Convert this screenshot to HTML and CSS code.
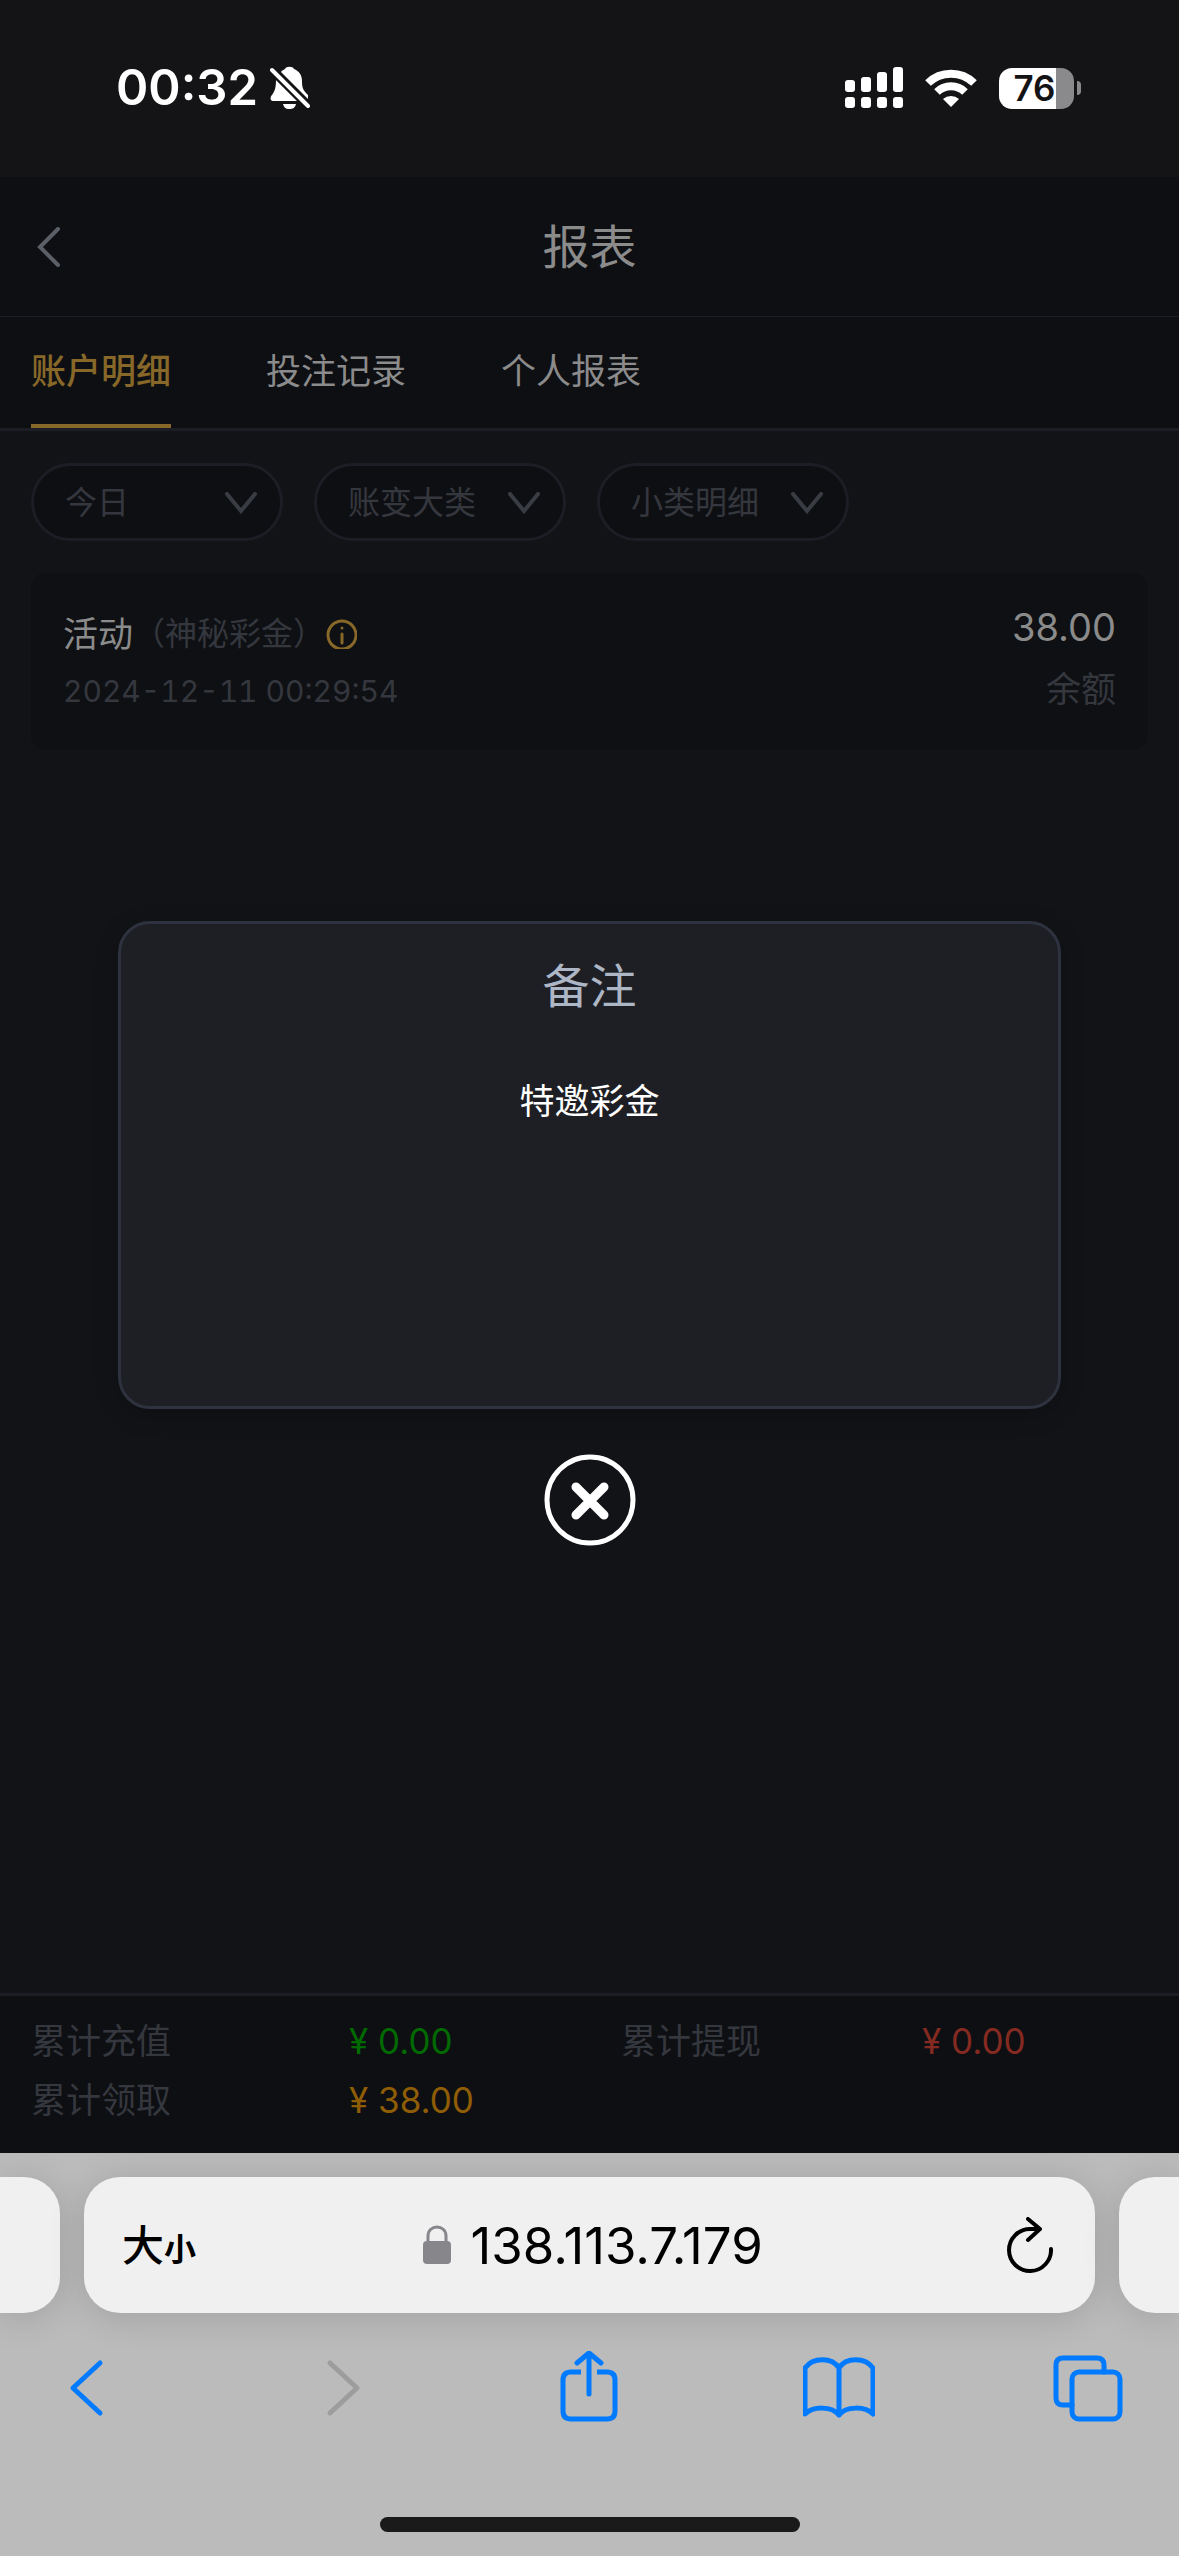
FILE: index.html
```html
<!DOCTYPE html>
<html lang="zh-CN">

<head>
	<meta charset="UTF-8">
	<meta name="viewport" content="width=device-width, initial-scale=1.0">
	<title>报表</title>
	<link rel="stylesheet" href="styles.css">
</head>

<body>
	<div class="status-bar">
		<div class="status-left">
			<span class="time">00:32</span>
			<svg class="bell" width="40" height="44" viewBox="0 0 40 44">
				<path fill="#fff" d="M11 6 C12 4 14 4 15 3 C16 0 23 0 24 3 C29 5 32 9 32 15 C32 22 33 24 38 29 V33 Z" />
				<path fill="#fff" d="M6 14 L27 35 H3 C0 35 0 31 2 29 C5 25 6 21 6 14 Z" />
				<path fill="#fff" d="M13 38 H26 C25 42 23 43 19 43 C16 43 14 42 13 38 Z" />
				<path stroke="#141416" stroke-width="8" d="M2 4 L38 40" />
				<path stroke="#fff" stroke-width="4" stroke-linecap="round" d="M2 4 L38 40" />
			</svg>
		</div>
		<div class="status-right">
			<svg width="58" height="42" viewBox="0 0 58 42" fill="#fff">
				<rect x="0" y="13" width="10" height="12" rx="3" />
				<rect x="16" y="10" width="10" height="15" rx="3" />
				<rect x="32" y="5" width="10" height="20" rx="3" />
				<rect x="48" y="0" width="10" height="25" rx="3" />
				<rect x="0" y="30" width="10" height="11" rx="3" />
				<rect x="16" y="30" width="10" height="11" rx="3" />
				<rect x="32" y="30" width="10" height="11" rx="3" />
				<rect x="48" y="30" width="10" height="11" rx="3" />
			</svg>
			<svg width="52" height="38" viewBox="0 0 52 38">
				<path fill="none" stroke="#fff" stroke-width="8" d="M3 14 A33 33 0 0 1 49 14" />
				<path fill="none" stroke="#fff" stroke-width="8" d="M12 23 A20 20 0 0 1 40 23" />
				<path fill="#fff" d="M26 38 L18 30 A12 12 0 0 1 34 30 Z" />
			</svg>
			<div class="battery">
				<div class="battery-body">76</div>
				<div class="battery-cap"></div>
			</div>
		</div>
	</div>

	<div class="app">
		<header class="nav-bar">
			<button class="nav-back" aria-label="返回">
				<svg width="24" height="40" viewBox="0 0 24 40">
					<path d="M22 2 L4 20 L22 38" />
				</svg>
			</button>
			<h1>报表</h1>
		</header>

		<nav class="tabs">
			<a href="#" class="tab active">账户明细</a>
			<a href="#" class="tab">投注记录</a>
			<a href="#" class="tab">个人报表</a>
		</nav>

		<main>
			<div class="filters">
				<div class="filter">
					<select name="date" aria-label="日期">
						<option>今日</option>
					</select>
					<svg class="arrow" width="32" height="22" viewBox="0 0 32 22">
						<path d="M2 2 L16 19 L30 2" />
					</svg>
				</div>
				<div class="filter">
					<select name="category" aria-label="账变大类">
						<option>账变大类</option>
					</select>
					<svg class="arrow" width="32" height="22" viewBox="0 0 32 22">
						<path d="M2 2 L16 19 L30 2" />
					</svg>
				</div>
				<div class="filter">
					<select name="detail" aria-label="小类明细">
						<option>小类明细</option>
					</select>
					<svg class="arrow" width="32" height="22" viewBox="0 0 32 22">
						<path d="M2 2 L16 19 L30 2" />
					</svg>
				</div>
			</div>

			<div class="record">
				<div class="record-info">
					<div class="record-title">
						<span>活动</span><span class="record-type">（神秘彩金）</span>
						<button class="info" aria-label="备注">
							<svg width="32" height="30" viewBox="0 0 32 30">
								<circle cx="17" cy="16" r="14" />
								<path d="M17 15 V24 M17 9 V9" />
							</svg>
						</button>
					</div>
					<div class="record-date">2024-12-11 00:29:54</div>
				</div>
				<div class="record-sum">
					<div class="amount">38.00</div>
					<div class="record-balance">余额</div>
				</div>
			</div>
		</main>

		<footer class="totals">
			<span>累计充值</span>
			<span class="green">¥ 0.00</span>
			<span>累计提现</span>
			<span class="red">¥ 0.00</span>
			<span>累计领取</span>
			<span class="orange">¥ 38.00</span>
		</footer>

		<div class="overlay">
			<div class="modal" role="dialog" aria-labelledby="modal-title">
				<h2 id="modal-title">备注</h2>
				<p>特邀彩金</p>
				<button class="modal-close" aria-label="关闭">
					<svg width="92" height="92" viewBox="0 0 92 92">
						<circle cx="46" cy="46" r="43" stroke-width="5" />
						<path stroke-width="9" d="M32 33 L60 61 M60 33 L32 61" />
					</svg>
				</button>
			</div>
		</div>
	</div>

	<div class="browser">
		<div class="address-row">
			<div class="side-tab left"></div>
			<div class="address">
				<button class="text-size" aria-label="文字大小">大<small>小</small></button>
				<label class="url">
					<svg width="28" height="40" viewBox="0 0 28 40">
						<rect x="0" y="16" width="28" height="23" rx="4" fill="#86868b" />
						<path d="M5 17 V11 C5 -1 23 -1 23 11 V17" fill="none" stroke="#86868b" stroke-width="3" />
					</svg>
					<input type="text" value="138.113.7.179" aria-label="网址">
				</label>
				<button class="reload" aria-label="刷新">
					<svg width="46" height="56" viewBox="0 0 46 56">
						<path d="M32 12 H23 A21 21 0 1 0 44 32 M21 2 L33 12 L21 23" />
					</svg>
				</button>
			</div>
			<div class="side-tab right"></div>
		</div>

		<div class="toolbar">
			<button aria-label="后退">
				<svg width="72" height="74" viewBox="0 0 72 74">
					<path d="M48 12 L21 37 L48 62" />
				</svg>
			</button>
			<button aria-label="前进" disabled>
				<svg width="72" height="74" viewBox="0 0 72 74">
					<path d="M28 12 L55 37 L28 62" />
				</svg>
			</button>
			<button aria-label="分享">
				<svg width="72" height="74" viewBox="0 0 72 74">
					<path stroke-linecap="butt" d="M28 21 H18 Q10 21 10 29 V60 Q10 68 18 68 H54 Q62 68 62 60 V29 Q62 21 54 21 H44" />
					<path d="M36 43 V3 M24 12 L36 2 L48 12" />
				</svg>
			</button>
			<button aria-label="书签">
				<svg width="72" height="74" viewBox="0 0 72 74">
					<path d="M36 17 C29 6 10 6 2 17 V63 C10 55 29 55 36 64 C43 55 62 55 70 63 V17 C62 6 43 6 36 17 V64" />
				</svg>
			</button>
			<button aria-label="标签页">
				<svg width="72" height="74" viewBox="0 0 72 74">
					<rect x="19" y="21" width="48" height="47" rx="7" />
					<path d="M19 54 H10 Q3 54 3 47 V14 Q3 7 10 7 H44 Q51 7 51 14 V21" />
				</svg>
			</button>
		</div>
		<div class="home-bar"></div>
	</div>
</body>

</html>
```
FILE: styles.css
```css
* {
	box-sizing: border-box;
}

body {
	display: flex;
	flex-direction: column;
	min-height: 100vh;
	margin: 0;
	background: #121317;
	color: #8b8b8b;
	font-family: Inter, "Noto Sans CJK SC", sans-serif;
	font-size: 35px;
	line-height: 50px;
}

h1,
h2,
p {
	margin: 0;
	font-weight: 400;
}

button,
select,
input {
	padding: 0;
	border: none;
	background: none;
	color: inherit;
	font: inherit;
}

svg {
	display: block;
}

/* status bar */
.status-bar {
	display: flex;
	justify-content: space-between;
	height: 177px;
	padding: 58px 98px 59px 116px;
	background: #141416;
	color: white;
}

.status-left,
.status-right {
	display: flex;
	align-items: center;
	height: 60px;
}

.status-left {
	gap: 12px;
}

.status-right {
	gap: 22px;
}

.time {
	font-size: 49px;
	font-weight: 600;
}

.battery {
	display: flex;
	align-items: center;
	gap: 3px;
}

.battery-body {
	width: 75px;
	height: 41px;
	padding-right: 4px;
	border-radius: 13px;
	background: linear-gradient(to right, white 57px, #8a8a8c 57px);
	color: #141416;
	font-size: 35px;
	font-weight: 600;
	line-height: 41px;
	text-align: center;
}

.battery-cap {
	width: 4px;
	height: 14px;
	border-radius: 0 4px 4px 0;
	background: #8a8a8c;
}

/* page */
.app {
	position: relative;
	display: flex;
	flex: 1;
	flex-direction: column;
}

.nav-bar {
	display: grid;
	grid-template-columns: 60px 1fr 60px;
	align-items: center;
	height: 140px;
	padding: 0 36px;
	border-bottom: 1px solid #1c1d25;
	background: #0e0f13;
}

.nav-bar path {
	fill: none;
	stroke: #5b5f68;
	stroke-width: 4;
	stroke-linecap: round;
}

.nav-bar h1 {
	font-size: 47px;
	text-align: center;
}

.tabs {
	display: flex;
	gap: 95px;
	padding: 0 31px;
	border-bottom: 3px solid #1c1d25;
	background: #0e0f13;
}

.tab {
	height: 111px;
	border-bottom: 4px solid transparent;
	color: inherit;
	line-height: 108px;
	text-decoration: none;
}

.tab.active {
	border-color: #876829;
	color: #876829;
	font-weight: 500;
}

main {
	flex: 1;
	padding: 32px 31px;
}

.filters {
	display: flex;
	gap: 31px;
	margin-bottom: 32px;
}

.filter {
	position: relative;
	width: 252px;
	height: 78px;
}

.filter select {
	width: 100%;
	height: 100%;
	padding: 2px 70px 0 31px;
	border: 3px solid #1c1d25;
	border-radius: 39px;
	background: #0e0f13;
	color: #35373e;
	font-size: 32px;
	appearance: none;
}

.arrow {
	position: absolute;
	top: 29px;
	right: 26px;
	pointer-events: none;
}

.arrow path {
	fill: none;
	stroke: #3a3c44;
	stroke-width: 4;
	stroke-linecap: round;
}

.record {
	display: flex;
	justify-content: space-between;
	height: 177px;
	padding: 29px 32px;
	border-radius: 15px;
	background: #0e1013;
}

.record-title {
	display: flex;
	align-items: center;
	height: 64px;
}

.record-type,
.record-date {
	color: #35373e;
	font-size: 32px;
}

.record-date {
	font-size: 30px;
	font-variant-numeric: tabular-nums;
}

.info path,
.info circle {
	fill: none;
	stroke: #876829;
	stroke-width: 3;
	stroke-linecap: round;
}

.record-sum {
	text-align: right;
}

.amount {
	font-size: 38px;
}

.record-balance {
	margin-top: 12px;
	color: #35373e;
}

.totals {
	display: grid;
	grid-template-columns: 318fr 272fr 301fr 226fr;
	grid-auto-rows: 59px;
	padding: 16px 31px 23px;
	border-top: 3px solid #1c1d25;
	background: #0e0f13;
	color: #35373e;
	line-height: 59px;
}

.green {
	color: #006a00;
}

.red {
	color: #842a20;
}

.orange {
	color: #8f5d05;
}

/* remark dialog */
.overlay {
	position: absolute;
	inset: 0;
	display: flex;
	align-items: center;
	justify-content: center;
}

.modal {
	position: relative;
	width: 80%;
	height: 488px;
	padding: 32px;
	border: 3px solid #2d323e;
	border-radius: 32px;
	background: #1e1f24;
	box-shadow: 0 6px 24px rgba(0, 0, 0, 0.2);
	text-align: center;
}

.modal h2 {
	margin-bottom: 60px;
	color: #acb6c5;
	font-size: 47px;
	line-height: 60px;
}

.modal p {
	color: white;
}

.modal-close {
	position: absolute;
	top: calc(100% + 48px);
	left: calc(50% - 46px);
}

.modal-close svg {
	fill: none;
	stroke: white;
	stroke-linecap: round;
}

/* browser controls */
.browser {
	height: 403px;
	padding-top: 24px;
	overflow: hidden;
	background: #bbb;
	color: black;
}

.address-row {
	display: flex;
	gap: 24px;
	height: 136px;
}

.address,
.side-tab {
	background: #f0f0f0;
	box-shadow: 0 4px 36px rgba(0, 0, 0, 0.14);
}

.side-tab {
	width: 60px;
}

.side-tab.left {
	border-radius: 0 36px 36px 0;
}

.side-tab.right {
	border-radius: 36px 0 0 36px;
}

.address {
	display: flex;
	flex: 1;
	align-items: center;
	justify-content: space-between;
	padding: 0 42px 0 38px;
	border-radius: 36px;
}

.text-size {
	width: 80px;
	padding-top: 6px;
	font-size: 42px;
	font-weight: 500;
	text-align: left;
	white-space: nowrap;
}

.text-size small {
	font-size: 32px;
	font-weight: 700;
}

.url {
	display: flex;
	align-items: center;
	gap: 20px;
}

.url input {
	width: 300px;
	font-size: 51px;
	field-sizing: content;
}

.reload {
	padding-left: 16px;
}

.reload path,
.toolbar svg {
	fill: none;
	stroke: black;
	stroke-width: 4;
	stroke-linecap: round;
	stroke-linejoin: round;
}

.toolbar {
	display: flex;
	justify-content: space-between;
	padding: 38px 54px 0 52px;
}

.toolbar svg {
	stroke: #007aff;
	stroke-width: 5;
}

.toolbar button:disabled svg {
	stroke: #9d9d9d;
}

.home-bar {
	width: 420px;
	height: 15px;
	margin: 92px auto 0;
	border-radius: 8px;
	background: #1a1a1a;
}
```
